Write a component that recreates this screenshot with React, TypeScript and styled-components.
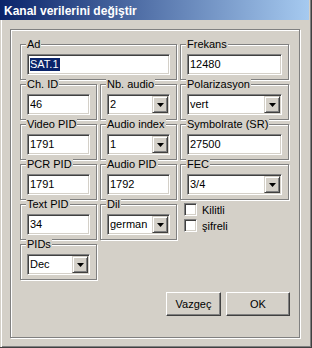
import React from "react";
import styled, { createGlobalStyle } from "styled-components";

const Global = createGlobalStyle`
  html, body { margin: 0; padding: 0; background: #d4d0c8; }
  * { box-sizing: border-box; }
`;

const Window = styled.div`
  width: 312px;
  height: 348px;
  background: #d4d0c8;
  display: flex;
  flex-direction: column;
  border-right: 1px solid #404040;
  border-bottom: 1px solid #404040;
  box-shadow: inset -1px -1px 0 #808080;
  font-family: "Liberation Sans", Arial, sans-serif;
  font-size: 11px;
  color: #000;
`;

const TitleBar = styled.div`
  height: 20px;
  margin-right: 2px;
  background: linear-gradient(to right, #0a246a, #a6caf0);
  color: #fff;
  font-weight: bold;
  font-size: 12px;
  display: flex;
  align-items: center;
  padding-left: 4px;
  padding-top: 1px;
`;

const Body = styled.div`
  flex: 1;
  display: flex;
  padding: 9px 11px 9px 10px;
  box-shadow: inset 1px 0 0 #d4d0c8, inset 2px 0 0 #fff;
`;

const Panel = styled.div`
  flex: 1;
  border: 1px solid #808080;
  box-shadow: inset 1px 1px 0 #fff, 1px 1px 0 #fff;
  padding: 14px 9px 0 9px;
  display: flex;
  flex-direction: column;
`;

const Grid = styled.div`
  display: grid;
  grid-template-columns: 78px 78px 110px;
  grid-auto-rows: 37px;
  column-gap: 2px;
  row-gap: 3px;
`;

const Group = styled.div<{ $span?: number }>`
  position: relative;
  grid-column: span ${(p) => p.$span ?? 1};
  width: calc(100% - 1px);
  height: 36px;
  border: 1px solid #808080;
  box-shadow: inset 1px 1px 0 #fff, 1px 1px 0 #fff;
  padding: 9px 6px 0 6px;
`;

const Legend = styled.span`
  position: absolute;
  top: -7px;
  left: 5px;
  padding: 0 1px;
  line-height: 13px;
  background: #d4d0c8;
  white-space: nowrap;
`;

const Field = styled.div`
  height: 21px;
  width: 100%;
  background: #fff;
  border: 1px solid;
  border-color: #808080 #fff #fff #808080;
  box-shadow: inset 1px 1px 0 #404040, inset -1px -1px 0 #d4d0c8;
  padding: 1px 1px 1px 2px;
  display: flex;
  align-items: stretch;
`;

const Value = styled.span`
  flex: 1;
  display: flex;
  align-items: center;
  line-height: 13px;
  white-space: nowrap;
  overflow: hidden;
`;

const Selected = styled.span`
  background: #0a246a;
  color: #fff;
  padding: 0 1px;
  margin-left: -1px;
`;

const DropButton = styled.span`
  width: 16px;
  background: #d4d0c8;
  border: 1px solid;
  border-color: #d4d0c8 #404040 #404040 #d4d0c8;
  box-shadow: inset 1px 1px 0 #fff, inset -1px -1px 0 #808080;
  display: flex;
  align-items: center;
  justify-content: center;
`;

const Checks = styled.div`
  display: flex;
  flex-direction: column;
  gap: 3px;
  padding: 0 0 0 4px;
  margin-top: -1px;
`;

const CheckRow = styled.label`
  display: flex;
  align-items: center;
  gap: 5px;
  height: 13px;
`;

const CheckBox = styled.span`
  width: 13px;
  height: 13px;
  background: #fff;
  border: 1px solid;
  border-color: #808080 #fff #fff #808080;
  box-shadow: inset 1px 1px 0 #404040, inset -1px -1px 0 #d4d0c8;
`;

const Buttons = styled.div`
  display: flex;
  justify-content: flex-end;
  gap: 5px;
  margin-top: 11px;
`;

const Button = styled.button<{ $w: number }>`
  width: ${(p) => p.$w}px;
  height: 24px;
  background: #d4d0c8;
  border: 1px solid;
  border-color: #fff #404040 #404040 #fff;
  box-shadow: inset -1px -1px 0 #808080, inset 1px 1px 0 #d4d0c8;
  font-family: "Liberation Sans", Arial, sans-serif;
  font-size: 11px;
  color: #000;
  padding: 0;
`;

const Arrow = () => (
  <svg width="7" height="4" viewBox="0 0 7 4">
    <path d="M0 0h7L3.5 4z" fill="#000" />
  </svg>
);

const Input = ({ children }: { children: React.ReactNode }) => (
  <Field>
    <Value>{children}</Value>
  </Field>
);

const Select = ({ children }: { children: React.ReactNode }) => (
  <Field>
    <Value>{children}</Value>
    <DropButton>
      <Arrow />
    </DropButton>
  </Field>
);

export default function App() {
  return (
    <>
      <Global />
      <Window>
        <TitleBar>Kanal verilerini değiştir</TitleBar>
        <Body>
          <Panel>
            <Grid>
              <Group $span={2}>
                <Legend>Ad</Legend>
                <Input>
                  <Selected>SAT.1</Selected>
                </Input>
              </Group>
              <Group>
                <Legend>Frekans</Legend>
                <Input>12480</Input>
              </Group>

              <Group>
                <Legend>Ch. ID</Legend>
                <Input>46</Input>
              </Group>
              <Group>
                <Legend>Nb. audio</Legend>
                <Select>2</Select>
              </Group>
              <Group>
                <Legend>Polarizasyon</Legend>
                <Select>vert</Select>
              </Group>

              <Group>
                <Legend>Video PID</Legend>
                <Input>1791</Input>
              </Group>
              <Group>
                <Legend>Audio index</Legend>
                <Select>1</Select>
              </Group>
              <Group>
                <Legend>Symbolrate (SR)</Legend>
                <Input>27500</Input>
              </Group>

              <Group>
                <Legend>PCR PID</Legend>
                <Input>1791</Input>
              </Group>
              <Group>
                <Legend>Audio PID</Legend>
                <Input>1792</Input>
              </Group>
              <Group>
                <Legend>FEC</Legend>
                <Select>3/4</Select>
              </Group>

              <Group>
                <Legend>Text PID</Legend>
                <Input>34</Input>
              </Group>
              <Group>
                <Legend>Dil</Legend>
                <Select>german</Select>
              </Group>
              <Checks>
                <CheckRow>
                  <CheckBox />
                  Kilitli
                </CheckRow>
                <CheckRow>
                  <CheckBox />
                  şifreli
                </CheckRow>
              </Checks>

              <Group>
                <Legend>PIDs</Legend>
                <Select>Dec</Select>
              </Group>
            </Grid>
            <Buttons>
              <Button $w={55}>Vazgeç</Button>
              <Button $w={64}>OK</Button>
            </Buttons>
          </Panel>
        </Body>
      </Window>
    </>
  );
}
